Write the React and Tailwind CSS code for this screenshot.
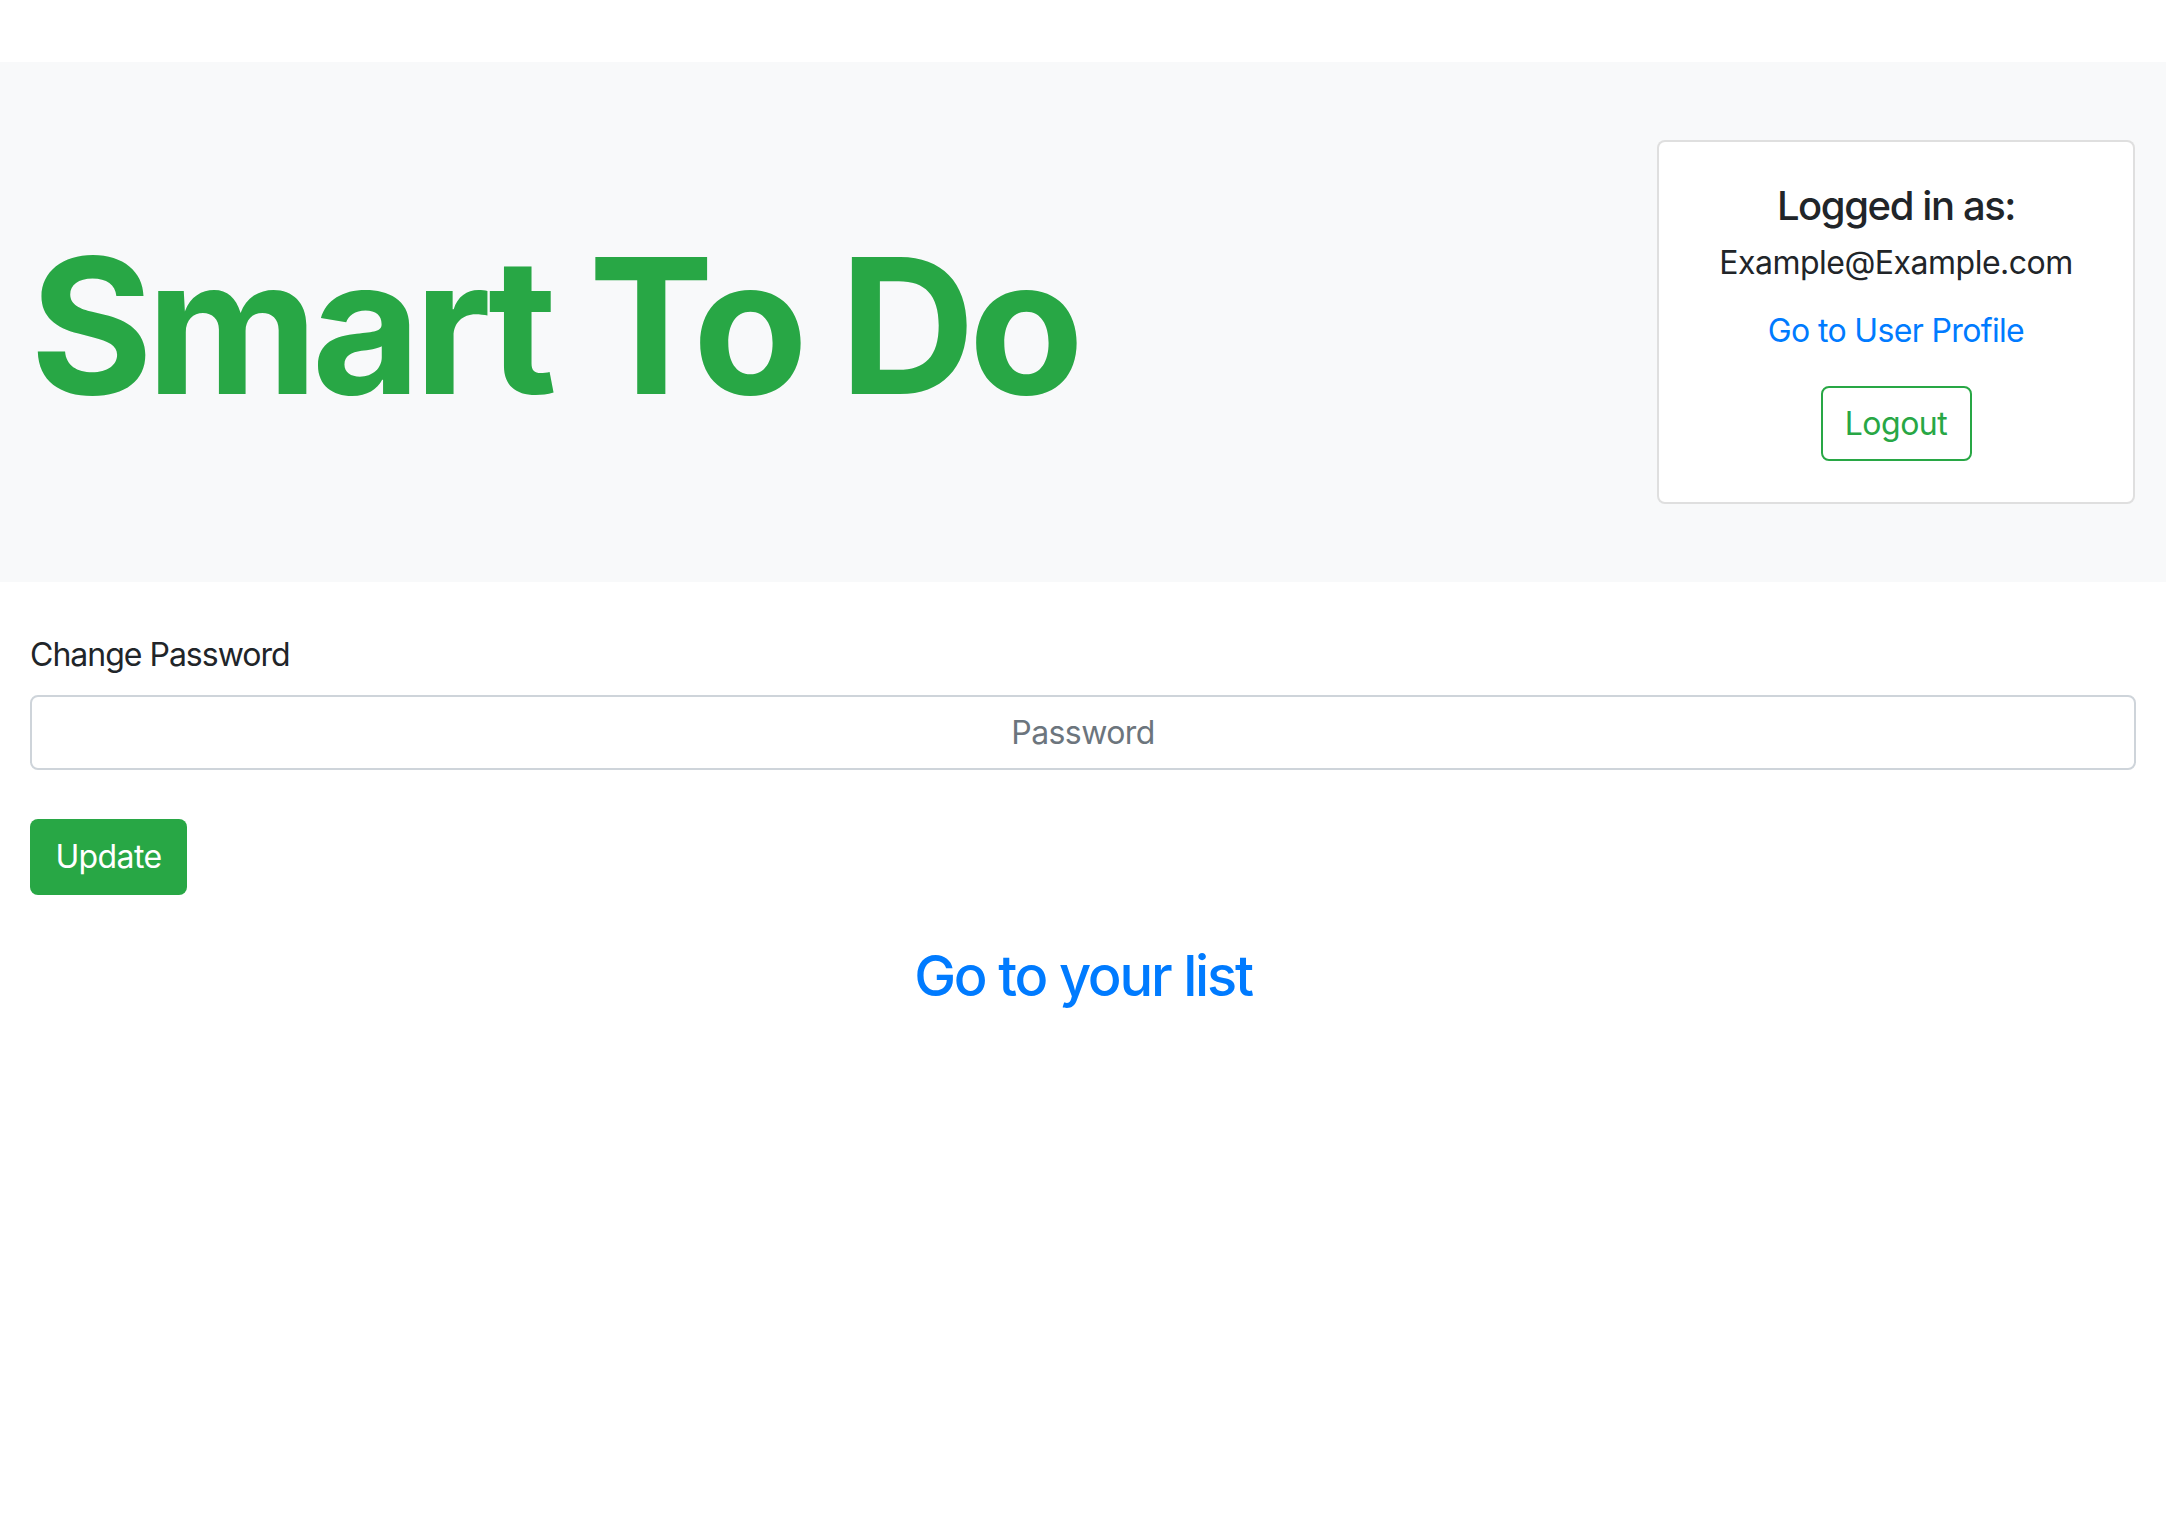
import React from "react";

export default function App() {
  return (
    <div className="min-h-screen bg-white text-[#212529] font-['Inter','Liberation_Sans',sans-serif]">
      <div className="h-[62px]" />
      <header className="h-[520px] bg-[#f8f9fa] flex items-center justify-between pl-[30px] pr-[31px]">
        <h1 className="text-[188px] font-bold text-[#28a745] tracking-[-6.5px] leading-none pt-[7px] whitespace-nowrap">
          Smart To Do
        </h1>
        <div className="w-[478px] h-[364px] bg-white border-2 border-[rgba(0,0,0,0.125)] rounded-[8px] pt-[40px] px-[40px] flex flex-col items-center text-center">
          <h5 className="text-[40px] leading-[48px] font-medium tracking-[-1.4px] mb-[9px]">Logged in as:</h5>
          <p className="text-[32px] leading-[48px] tracking-[-0.5px]">Example@Example.com</p>
          <a href="#" className="mt-[20px] text-[32px] leading-[48px] tracking-[-0.65px] text-[#007bff]">
            Go to User Profile
          </a>
          <button className="mt-[31px] h-[75px] w-[151px] border-2 border-[#28a745] rounded-[8px] text-[#28a745] text-[32px] leading-[48px] tracking-[-0.5px] bg-transparent">
            Logout
          </button>
        </div>
      </header>
      <main className="px-[30px] pt-[49px]">
        <label className="block text-[32px] leading-[48px] tracking-[-1px] mb-[16px]">Change Password</label>
        <input
          type="password"
          placeholder="Password"
          className="block w-full h-[75px] border-2 border-[#ced4da] rounded-[8px] text-center text-[32px] tracking-[-0.6px] px-[24px] placeholder:text-[#6c757d] outline-none"
        />
        <button className="mt-[49px] h-[76px] w-[157px] bg-[#28a745] text-white rounded-[8px] text-[32px] leading-[48px] tracking-[-0.6px]">
          Update
        </button>
        <h3 className="mt-[48px] text-center text-[56px] leading-[1.2] font-medium tracking-[-2.2px]">
          <a href="#" className="text-[#007bff]">Go to your list</a>
        </h3>
      </main>
    </div>
  );
}
